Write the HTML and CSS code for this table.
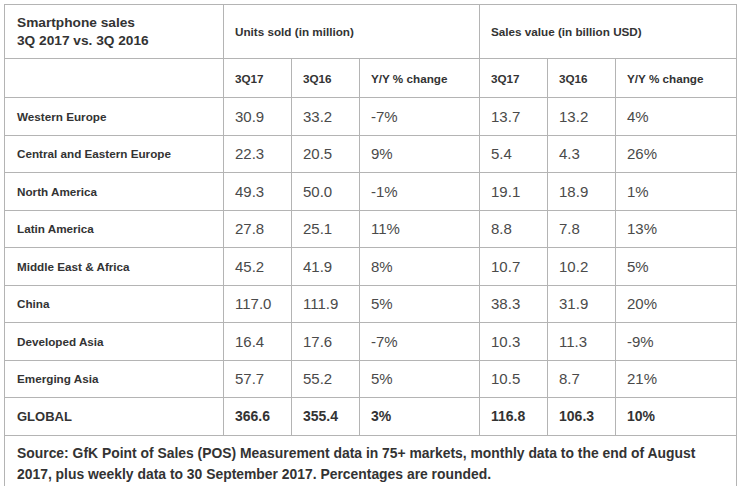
FILE: index.html
```html
<!DOCTYPE html>
<html>
<head>
<meta charset="utf-8">
<link rel="stylesheet" href="styles.css">
</head>
<body>
<div class="wrap">
<table class="sales">
  <colgroup>
    <col class="c-label">
    <col class="c-num">
    <col class="c-num">
    <col class="c-chg">
    <col class="c-num">
    <col class="c-num">
    <col class="c-chg2">
  </colgroup>
  <tbody>
    <tr class="r-top">
      <td class="title">Smartphone sales<br>3Q 2017 vs. 3Q 2016</td>
      <td class="group" colspan="3">Units sold (in million)</td>
      <td class="group" colspan="3">Sales value (in billion USD)</td>
    </tr>
    <tr class="r-sub">
      <td></td>
      <td class="sub">3Q17</td>
      <td class="sub">3Q16</td>
      <td class="sub">Y/Y % change</td>
      <td class="sub">3Q17</td>
      <td class="sub">3Q16</td>
      <td class="sub">Y/Y % change</td>
    </tr>
    <tr class="r-data"><td class="label">Western Europe</td><td>30.9</td><td>33.2</td><td>-7%</td><td>13.7</td><td>13.2</td><td>4%</td></tr>
    <tr class="r-data"><td class="label">Central and Eastern Europe</td><td>22.3</td><td>20.5</td><td>9%</td><td>5.4</td><td>4.3</td><td>26%</td></tr>
    <tr class="r-data"><td class="label">North America</td><td>49.3</td><td>50.0</td><td>-1%</td><td>19.1</td><td>18.9</td><td>1%</td></tr>
    <tr class="r-data"><td class="label">Latin America</td><td>27.8</td><td>25.1</td><td>11%</td><td>8.8</td><td>7.8</td><td>13%</td></tr>
    <tr class="r-data"><td class="label">Middle East &amp; Africa</td><td>45.2</td><td>41.9</td><td>8%</td><td>10.7</td><td>10.2</td><td>5%</td></tr>
    <tr class="r-data"><td class="label">China</td><td>117.0</td><td>111.9</td><td>5%</td><td>38.3</td><td>31.9</td><td>20%</td></tr>
    <tr class="r-data"><td class="label">Developed Asia</td><td>16.4</td><td>17.6</td><td>-7%</td><td>10.3</td><td>11.3</td><td>-9%</td></tr>
    <tr class="r-data"><td class="label">Emerging Asia</td><td>57.7</td><td>55.2</td><td>5%</td><td>10.5</td><td>8.7</td><td>21%</td></tr>
    <tr class="r-data r-global"><td class="label">GLOBAL</td><td>366.6</td><td>355.4</td><td>3%</td><td>116.8</td><td>106.3</td><td>10%</td></tr>
    <tr class="r-source">
      <td colspan="7">Source: GfK Point of Sales (POS) Measurement data in 75+ markets, monthly data to the end of August 2017, plus weekly data to 30 September 2017. Percentages are rounded.</td>
    </tr>
  </tbody>
</table>
</div>
</body>
</html>
```

FILE: styles.css
```css
html, body {
  margin: 0;
  padding: 0;
  background: #ffffff;
  overflow: hidden;
}

.wrap {
  padding: 4px 0 0 4px;
}

.sales {
  border-collapse: collapse;
  table-layout: fixed;
  width: 732px;
  font-family: "Liberation Sans", Arial, sans-serif;
  color: #3a3a3a;
}

.c-label { width: 219px; }
.c-num { width: 68px; }
.c-chg { width: 120px; }
.c-chg2 { width: 121px; }

.sales td {
  border: 1px solid #b4b4b4;
  padding: 0 11px;
  vertical-align: middle;
  font-size: 15px;
  color: #4a4a4a;
  white-space: nowrap;
}

.r-top td { height: 53px; }
.r-sub td { height: 38px; }
.r-data td { height: 36.5px; }

.sales td.title {
  font-size: 13.7px;
  font-weight: bold;
  line-height: 18px;
  color: #333333;
  padding-left: 12px;
}

.sales td.group,
.sales td.sub {
  font-size: 11.7px;
  font-weight: bold;
  color: #333333;
}

.sales td.label {
  font-size: 11.7px;
  font-weight: bold;
  color: #333333;
  padding-left: 12px;
}

.r-global td {
  font-weight: bold;
  font-size: 14px;
  color: #333333;
}

.r-global td.label { font-size: 13px; }

.r-source td {
  white-space: normal;
  vertical-align: top;
  font-size: 13.9px;
  font-weight: bold;
  line-height: 21px;
  color: #333333;
  padding: 7px 12px 4px;
}
```
